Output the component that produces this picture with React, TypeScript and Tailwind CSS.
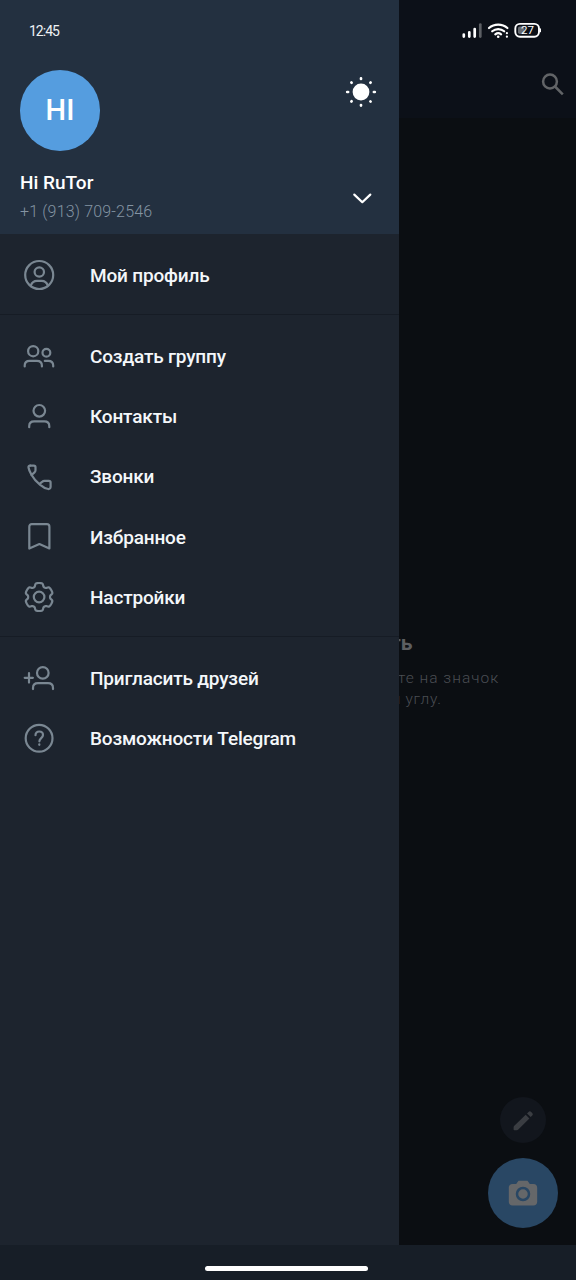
import type { ReactNode } from 'react'

type MenuItem = {
  label: string
  icon: ReactNode
}

// Cog outline with six rounded teeth, first tooth pointing up
function gearPath(cx: number, cy: number, inner: number, outer: number) {
  const points: string[] = []
  for (let deg = 0; deg < 360; deg += 3) {
    const a = (deg * Math.PI) / 180
    const wave = Math.tanh(2.6 * (Math.cos(6 * a) + 0.4))
    const r = (inner + outer) / 2 + ((outer - inner) / 2) * wave
    points.push(`${(cx + r * Math.sin(a)).toFixed(2)} ${(cy - r * Math.cos(a)).toFixed(2)}`)
  }
  return `M${points.join('L')}Z`
}

function MenuIcon({ children }: { children: ReactNode }) {
  return (
    <svg
      viewBox="0 0 40 40"
      className="w-10 h-10 shrink-0 text-[#7a8792]"
      fill="none"
      stroke="currentColor"
      strokeWidth="2.2"
      strokeLinecap="round"
      strokeLinejoin="round"
    >
      {children}
    </svg>
  )
}

const profileItems: MenuItem[] = [
  {
    label: 'Мой профиль',
    icon: (
      <>
        <circle cx="20.2" cy="20" r="14" />
        <circle cx="20.3" cy="17" r="4.7" />
        <path d="M11.8 30.6c1-3 3.2-4.8 6.2-4.8h4.6c3 0 5.2 1.8 6.2 4.8" />
      </>
    ),
  },
]

const mainItems: MenuItem[] = [
  {
    label: 'Создать группу',
    icon: (
      <>
        <circle cx="14.2" cy="15.2" r="5.1" />
        <circle cx="27.4" cy="16.7" r="3.9" />
        <path d="M5.7 30.4v-.8c0-3 1.9-4.7 4.9-4.7h7.3c3 0 5 1.7 5 4.7v.8" />
        <path d="M25.8 24.9h3.4c3 0 5 1.7 5 4.7v.8" />
      </>
    ),
  },
  {
    label: 'Контакты',
    icon: (
      <>
        <circle cx="20.3" cy="14.8" r="5.8" />
        <path d="M10.2 31.2v-1c0-3 2-4.8 5-4.8h10.1c3 0 5 1.8 5 4.8v1" />
      </>
    ),
  },
  {
    label: 'Звонки',
    icon: (
      <>
        <path d="M11.2 8.6h3.6c1 0 1.7.7 1.7 1.7v3c0 .9-.3 1.5-1 2.1l-2.9 2.6" />
        <path d="M20.9 26.7l2.5-2.1c.6-.6 1.2-.8 2-.8h4.4c1.1 0 1.8.7 1.8 1.7v4.3c0 1.5-1 2.4-2.4 2.2-2.900-.4-5.800-2.100-8.300-4.300-3.100-2.500-6-5.600-8.300-9.700-1.700-3-2.800-5.200-3.100-7.500-.2-1.200.6-1.900 1.700-1.900" />
      </>
    ),
  },
  {
    label: 'Избранное',
    icon: <path d="M10.3 31.5V9.7c0-1.5 1-2.5 2.5-2.5h15.1c1.5 0 2.5 1 2.5 2.5v21.8l-10-4.4Z" />,
  },
  {
    label: 'Настройки',
    icon: (
      <>
        <path d={gearPath(20.1, 20, 10.8, 14)} />
        <circle cx="20.1" cy="20" r="5.3" />
      </>
    ),
  },
]

const extraItems: MenuItem[] = [
  {
    label: 'Пригласить друзей',
    icon: (
      <>
        <circle cx="23.8" cy="14.9" r="5.8" />
        <path d="M14 31.1v-1.2c0-3 2-4.8 5-4.8h10c3 0 5 1.8 5 4.8v1.2" />
        <path d="M5.7 19.8h8.2M10 15.2v9.4" />
      </>
    ),
  },
  {
    label: 'Возможности Telegram',
    icon: (
      <>
        <circle cx="20.1" cy="20.2" r="13.4" />
        <path d="M16.5 17.2c0-2.2 1.5-3.7 3.7-3.7s3.8 1.4 3.8 3.5c0 3.1-3.6 3.2-3.6 6.3" />
        <path d="M20.3 26.5v.3" strokeWidth="2.3" />
      </>
    ),
  },
]

function MenuSection({ items }: { items: MenuItem[] }) {
  return (
    <nav className="flex flex-col pt-[11px] pb-[9px]">
      {items.map((item) => (
        <button key={item.label} className="flex items-center h-[60.2px] pl-[19px] gap-[31px] text-left">
          <MenuIcon>{item.icon}</MenuIcon>
          <span className="pt-[2px] text-[19px] font-medium tracking-[-0.17px] text-[#f4f7fa] whitespace-nowrap">
            {item.label}
          </span>
        </button>
      ))}
    </nav>
  )
}

function SunIcon() {
  return (
    <svg viewBox="0 0 32 32" className="w-8 h-8 text-white" fill="none" stroke="currentColor" strokeWidth="2.7" strokeLinecap="round">
      <circle cx="16" cy="16" r="8.4" fill="currentColor" stroke="none" />
      <path d="M16 2.4v.5M16 29.1v.5M2.2 16h.9M28.9 16h.9M6.4 6.500l.2.2M25.400 25.400l.2.2M6.400 25.500l.2-.2M25.400 6.700l.2-.2" />
    </svg>
  )
}

function StatusIcons() {
  return (
    <svg viewBox="0 0 80 18" className="w-20 h-[18px] text-white" fill="none" stroke="currentColor" strokeLinecap="round">
      <g strokeWidth="2.7">
        <path d="M2.8 12.6v2M8.3 10.3v4.3M13.7 7v7.6" />
        <path d="M19.3 2.5v12.1" className="text-[#5c5f64]" stroke="currentColor" />
      </g>
      <g strokeWidth="2.2">
        <path d="M28 6c5.2-4.6 13.2-4.6 18.4 0M31.2 9.3c3.400-3 8.600-3 12 0M34.300 12.300c1.700-1.400 4.100-1.400 5.800 0" />
        <circle cx="37.2" cy="14.8" r="1.3" fill="currentColor" stroke="none" />
        <path d="M45.9 11v.2M45.9 14.5v.2" />
      </g>
      <rect x="54.3" y="1.9" width="23.7" height="12.8" rx="4.6" strokeWidth="1.9" />
      <rect x="57" y="4.5" width="6.5" height="7.6" rx="1.8" fill="#666a70" stroke="none" />
      <path d="M79.3 7v2.6" strokeWidth="1.5" />
      <text x="66.4" y="12.3" textAnchor="middle" fontSize="11.5" fontFamily="Roboto, sans-serif" fill="currentColor" stroke="none">
        27
      </text>
    </svg>
  )
}

function Drawer() {
  return (
    <aside className="flex flex-col w-[399px] shrink-0 bg-[#1d242e]">
      <header className="flex flex-col h-[234px] bg-[#233040]">
        <div className="pt-[22px] pl-[29px] h-[70px] text-[14px] leading-[18px] tracking-[-1px] text-[#eef1f4]">
          12:45
        </div>
        <div className="flex justify-between pl-5 pr-[22px]">
          <div className="flex items-center justify-center w-[80px] h-[81px] pt-px rounded-full bg-[#559ddf] text-white text-[29px] font-medium">
            HI
          </div>
          <div className="pt-[6px]">
            <SunIcon />
          </div>
        </div>
        <div className="flex justify-between pl-5 pr-[27px] pt-5">
          <div>
            <div className="text-[19px] leading-6 font-medium text-white">Hi RuTor</div>
            <div className="pt-[7px] text-[16px] leading-5 font-light tracking-[0.17px] text-[#8494a3]">
              +1 (913) 709-2546
            </div>
          </div>
          <svg viewBox="0 0 20 12" className="w-5 h-3 mt-[21px] text-white" fill="none" stroke="currentColor" strokeWidth="2.2" strokeLinecap="round" strokeLinejoin="round">
            <path d="M2.3 2.6l8 7.6 8-7.6" />
          </svg>
        </div>
      </header>
      <MenuSection items={profileItems} />
      <div className="h-px bg-[#161c25]" />
      <MenuSection items={mainItems} />
      <div className="h-px bg-[#161c25]" />
      <MenuSection items={extraItems} />
    </aside>
  )
}

// The strip of the chat list that stays visible, dimmed, next to the drawer
function ChatsBackdrop() {
  return (
    <main className="flex flex-col flex-1 overflow-hidden bg-[#0b0e12]">
      <div className="flex flex-col h-[118px] bg-[#0c1018]">
        <div className="flex pt-[22px] pl-[62px]">
          <StatusIcons />
        </div>
        <svg viewBox="0 0 24 24" className="w-6 h-6 mt-[32px] ml-[142px] text-[#626467]" fill="none" stroke="currentColor" strokeWidth="2.5">
          <circle cx="9" cy="9.5" r="6.9" />
          <path d="M14 14.5l7.8 7.8" />
        </svg>
      </div>
      <div className="flex flex-col pt-[511px] whitespace-nowrap">
        <div className="-ml-[9px] text-[21px] leading-7 font-bold text-[#5c5e61]">ть</div>
        <div className="pt-[11px] text-[15.5px] leading-[21px] font-light text-[#4a4d52]">
          <div className="-ml-px tracking-[1px]">те на значок</div>
          <div className="-ml-[10px] tracking-[0.7px]">м углу.</div>
        </div>
      </div>
      <div className="flex flex-col flex-1 items-center justify-end gap-[15px] pb-[17px] pl-[71px]">
        <button className="flex items-center justify-center w-[46px] h-[46px] rounded-full bg-[#12161d]">
          <svg viewBox="0 0 24 24" className="w-6 h-6 mt-px text-[#3a3d42]" fill="currentColor">
            <path d="M14.7 5.7l3.7 3.7L7.3 20.5c-.5.5-1 .7-1.700.7H3.400c-.5 0-.8-.3-.8-.8v-2c0-.7.2-1.200.7-1.700Z" />
            <path d="M16 4.4l1.5-1.5c.8-.8 1.9-.8 2.7 0l1 1c.8.8.8 1.9 0 2.7l-1.5 1.5Z" />
          </svg>
        </button>
        <button className="flex items-center justify-center w-[70px] h-[70px] rounded-full bg-[#294764]">
          <svg viewBox="0 0 30 28" className="w-[30px] h-7" fill="none">
            <path
              d="M10.5 1.8h9l2.3 3.2h3.7c2.2 0 3.7 1.5 3.7 3.7v14c0 2.2-1.5 3.7-3.7 3.7h-21C2.3 26.4.8 24.9.8 22.7V8.7C.8 6.5 2.3 5 4.5 5h3.7Z"
              fill="#656769"
            />
            <circle cx="15" cy="15" r="6" stroke="#294764" strokeWidth="2.5" />
          </svg>
        </button>
      </div>
    </main>
  )
}

export default function App() {
  return (
    <div className="flex flex-col w-[576px] h-[1280px] overflow-hidden font-['Roboto','Noto_Sans',sans-serif]">
      <div className="flex h-[1245px]">
        <Drawer />
        <ChatsBackdrop />
      </div>
      <footer className="flex justify-center h-[35px] pt-[21px] pr-[4px] bg-[#171e27]">
        <div className="w-[163px] h-[5px] rounded-full bg-white" />
      </footer>
    </div>
  )
}
